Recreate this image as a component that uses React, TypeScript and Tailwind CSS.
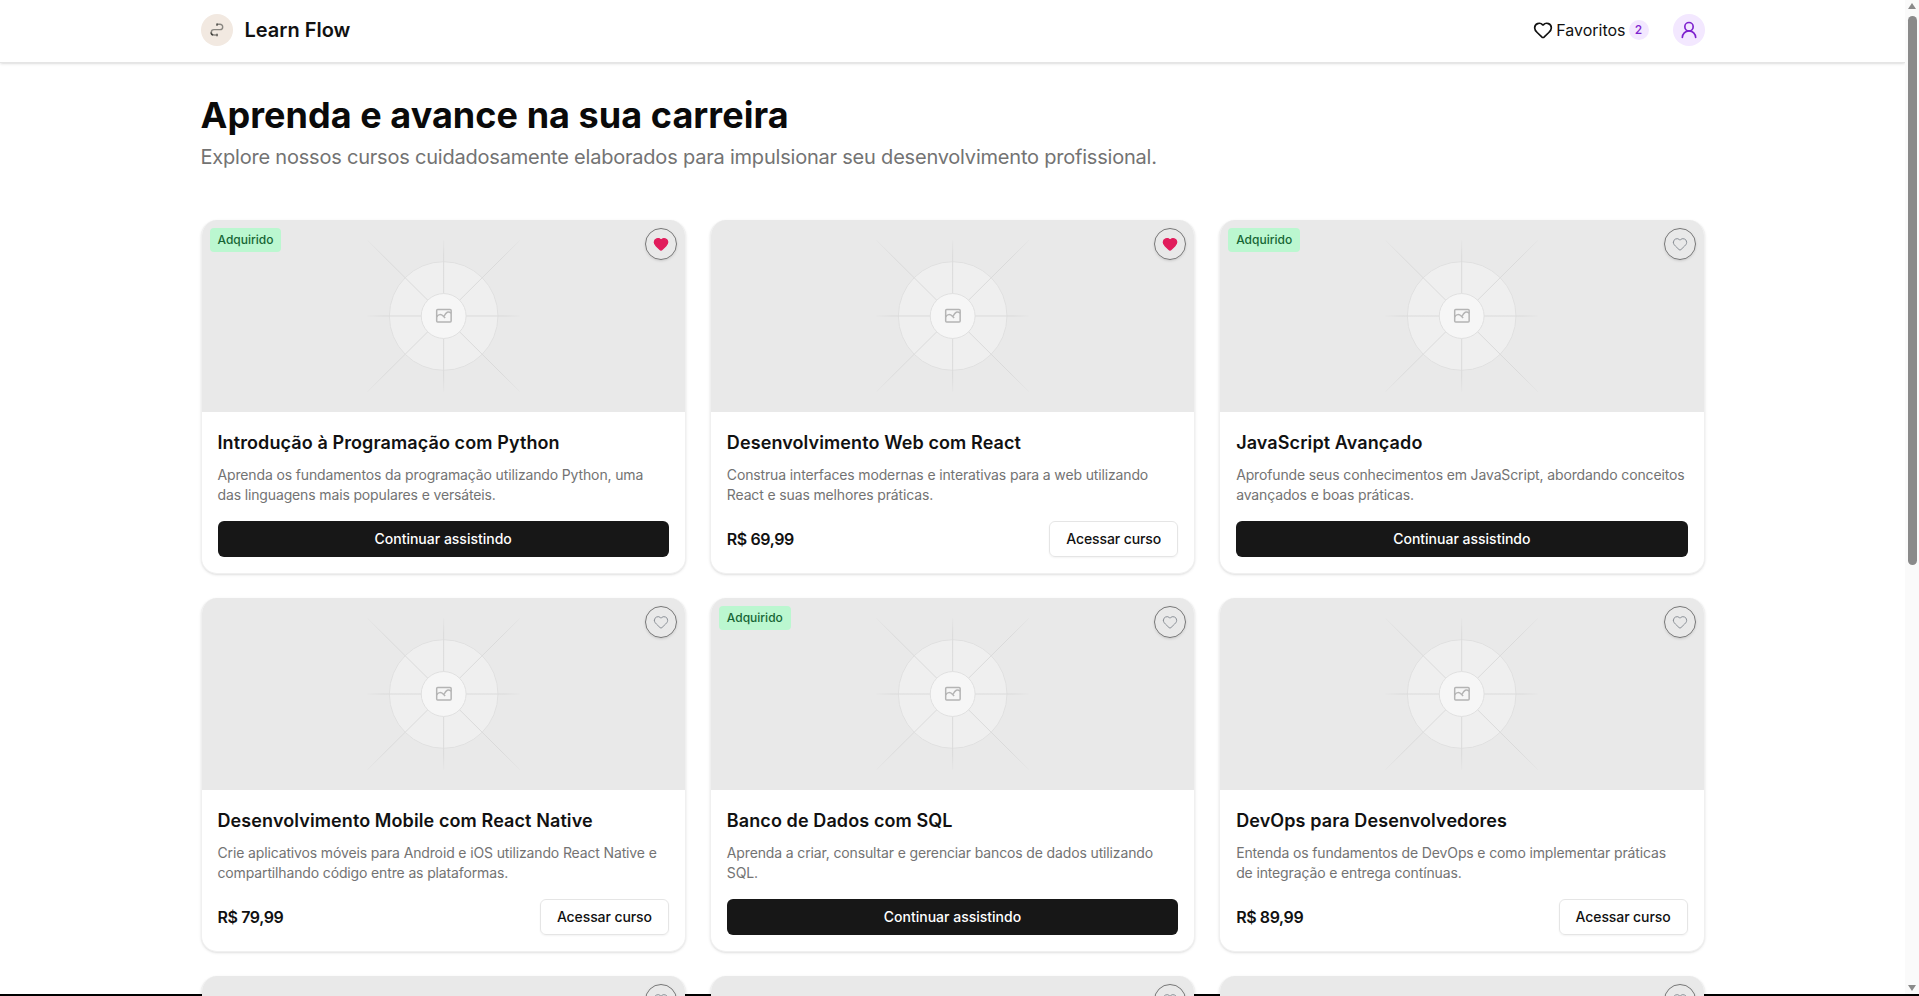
import React from 'react';
import { Heart, UserRound } from 'lucide-react';

type Course = {
  title?: string;
  description?: string;
  price?: string;
  owned?: boolean;
  favorite?: boolean;
};

const courses: Course[] = [
  {
    title: 'Introdução à Programação com Python',
    description: 'Aprenda os fundamentos da programação utilizando Python, uma das linguagens mais populares e versáteis.',
    owned: true,
    favorite: true,
  },
  {
    title: 'Desenvolvimento Web com React',
    description: 'Construa interfaces modernas e interativas para a web utilizando React e suas melhores práticas.',
    price: 'R$ 69,99',
    favorite: true,
  },
  {
    title: 'JavaScript Avançado',
    description: 'Aprofunde seus conhecimentos em JavaScript, abordando conceitos avançados e boas práticas.',
    owned: true,
  },
  {
    title: 'Desenvolvimento Mobile com React Native',
    description: 'Crie aplicativos móveis para Android e iOS utilizando React Native e compartilhando código entre as plataformas.',
    price: 'R$ 79,99',
  },
  {
    title: 'Banco de Dados com SQL',
    description: 'Aprenda a criar, consultar e gerenciar bancos de dados utilizando SQL.',
    owned: true,
  },
  {
    title: 'DevOps para Desenvolvedores',
    description: 'Entenda os fundamentos de DevOps e como implementar práticas de integração e entrega contínuas.',
    price: 'R$ 89,99',
  },
  // third row is cut by the window, only the image tops show
  {},
  {},
  {},
];

const Placeholder = () => (
  <svg viewBox="0 0 485 192" className="h-full w-full bg-[#e9e9e9]">
    <defs>
      <radialGradient id="rayStraight" gradientUnits="userSpaceOnUse" cx="242.5" cy="96" r="76">
        <stop offset="0.8" stopColor="#dadada" />
        <stop offset="1" stopColor="#e6e6e6" />
      </radialGradient>
      <radialGradient id="rayDiagonal" gradientUnits="userSpaceOnUse" cx="242.5" cy="96" r="108">
        <stop offset="0.75" stopColor="#dadada" />
        <stop offset="1" stopColor="#e6e6e6" />
      </radialGradient>
    </defs>
    <circle cx="242.5" cy="96" r="54.5" fill="#efefef" stroke="#e0e0e0" />
    <g stroke="url(#rayStraight)" strokeWidth="1">
      <line x1="242.5" y1="20" x2="242.5" y2="172" />
      <line x1="166" y1="96" x2="319" y2="96" />
    </g>
    <g stroke="url(#rayDiagonal)" strokeWidth="1">
      <line x1="166" y1="20" x2="319" y2="172" />
      <line x1="319" y1="20" x2="166" y2="172" />
    </g>
    <circle cx="242.5" cy="96" r="22.5" fill="#f6f6f6" stroke="#e0e0e0" />
    <g fill="none" stroke="#b4b4b4" strokeWidth="1.5">
      <rect x="235.500" y="89.500" width="14.500" height="12.500" rx="1" />
      <path d="M235.500 97 C237 94 240 94 242 96 L244 98 M243 96 C245 92 247 91 250 93" />
    </g>
  </svg>
);

const Logo = () => (
  <svg viewBox="0 0 16 14" className="h-[14px] w-4" fill="none" strokeWidth="1.4">
    <path d="M8 1.200 H11 A2.700 2.700 0 0 1 11 6.600 H5 A2.700 2.700 0 0 0 5 12 H7" stroke="#8a8781" />
    <path d="M8 0.500 V2.800 M8 10.800 V13.200 M1.900 9.500 A2.700 2.700 0 0 0 4 12" stroke="#44433f" />
  </svg>
);

const CourseCard = ({ course }: { course: Course }) => (
  <article className="flex h-[354px] flex-col overflow-hidden rounded-2xl border border-t-0 border-[#f0f0f0] bg-white shadow-sm">
    <div className="relative h-48 shrink-0">
      <Placeholder />
      {course.owned && (
        <span className="absolute left-2 top-2 rounded bg-[#bbf7d0] px-2 py-1 text-xs font-medium text-[#166534]">
          Adquirido
        </span>
      )}
      <button className="absolute right-2 top-2 flex h-8 w-8 items-center justify-center rounded-full border border-[#777777] shadow-sm">
        {course.favorite ? (
          <Heart className="h-4 w-4 fill-[#e11d5c] text-[#e11d5c]" />
        ) : (
          <Heart className="h-4 w-4 text-[#8a8f96]" strokeWidth={1.5} />
        )}
      </button>
    </div>
    {course.title && (
      <div className="flex flex-1 flex-col px-4 pt-[17px]">
        <h2 className="text-lg font-semibold leading-7 tracking-[0.1px] text-[#111111]">{course.title}</h2>
        <p className="mt-2 pr-[2.5px] text-sm leading-5 tracking-[-0.14px] text-[#737373]">{course.description}</p>
        {course.owned ? (
          <button className="mt-4 h-9 w-full rounded-md bg-[#171717] text-sm font-medium text-white">
            Continuar assistindo
          </button>
        ) : (
          <div className="mt-4 flex items-center justify-between">
            <span className="font-semibold tracking-[-0.4px] text-[#111111]">{course.price}</span>
            <button className="h-9 rounded-md border border-[#e5e5e5] px-4 text-sm font-medium tracking-[-0.1px] text-[#111111] shadow-xs">
              Acessar curso
            </button>
          </div>
        )}
      </div>
    )}
  </article>
);

const App: React.FC = () => {
  return (
    <div className="flex h-screen flex-col overflow-hidden bg-white font-['Inter','Liberation_Sans',sans-serif]">
      <div className="flex min-h-0 flex-1">
        <div className="min-w-0 flex-1">
          {/* Header */}
          <header className="border-b border-[#e5e5e5] shadow-sm">
            <div className="mx-auto flex max-w-[1536px] items-center justify-between px-4 pb-4 pt-[14px]">
              <div className="flex items-center gap-3">
                <div className="flex h-8 w-8 items-center justify-center rounded-full bg-[#f2e9e1]">
                  <Logo />
                </div>
                <span className="text-xl font-semibold text-[#111111]">Learn Flow</span>
              </div>
              <div className="flex items-center gap-6">
                <div className="flex items-center">
                  <Heart className="h-5 w-5 text-[#111111]" />
                  <span className="ml-[3px] text-base text-[#111111]">Favoritos</span>
                  <span className="ml-[3px] flex h-5 w-5 items-center justify-center rounded-full bg-[#f3e8ff] text-xs font-medium text-[#7e22ce]">
                    2
                  </span>
                </div>
                <div className="flex h-8 w-8 items-center justify-center rounded-full bg-[#f3e8ff]">
                  <UserRound className="h-5 w-5 text-[#7e22ce]" />
                </div>
              </div>
            </div>
          </header>

          {/* Content */}
          <main className="mx-auto max-w-[1536px] px-4 pt-8">
            <h1 className="text-4xl font-bold leading-10 tracking-[0.05px] text-[#0a0a0a]">
              Aprenda e avance na sua carreira
            </h1>
            <p className="mt-2 text-xl tracking-[-0.21px] text-[#737373]">
              Explore nossos cursos cuidadosamente elaborados para impulsionar seu desenvolvimento profissional.
            </p>
            <div className="mt-[49px] grid grid-cols-3 gap-6">
              {courses.map((course, i) => (
                <CourseCard key={i} course={course} />
              ))}
            </div>
          </main>
        </div>

        {/* Scrollbar */}
        <div className="flex w-[14px] shrink-0 flex-col items-center bg-[#fafafa]">
          <div className="mt-[3px] h-0 w-0 border-x-[4px] border-b-[6px] border-x-transparent border-b-[#8a8a8a]" />
          <div className="mt-[7px] h-[549px] w-[9px] rounded-full bg-[#8a8a8a]" />
          <div className="mb-[3px] mt-auto h-0 w-0 border-x-[4px] border-t-[6px] border-x-transparent border-t-[#8a8a8a]" />
        </div>
      </div>
      <div className="h-[2px] shrink-0 bg-black" />
    </div>
  );
};

export default App;
